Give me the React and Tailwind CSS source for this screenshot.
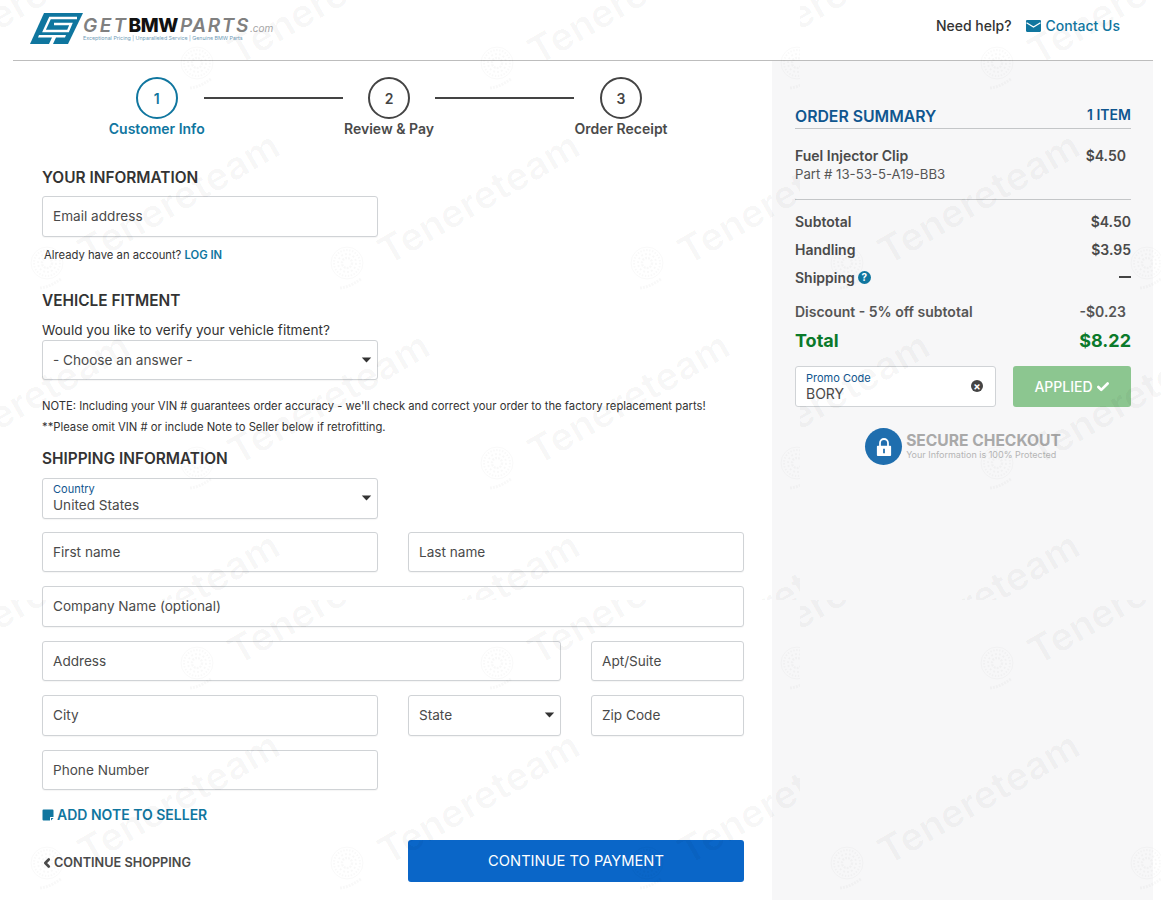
import React from 'react';
import { ChevronLeft, Check } from 'lucide-react';

// watermark image repeats every 800x600, each unit is a rosette with the name beside it
const TILES = [[0, 0], [800, 0], [0, 600], [800, 600]];
const MARKS = [
  [198, 63], [498, 63], [798, 63], [-102, 63],
  [48, 263], [348, 263], [648, 263], [-252, 263],
  [198, 463], [498, 463], [798, 463], [-102, 463],
  [48, 663], [348, 663], [648, 663], [-252, 663],
];

function Rosette({ x, y }) {
  return (
    <svg viewBox="0 0 40 46" className="absolute w-[40px] h-[46px]" style={{ left: x - 20, top: y - 17 }}>
      <g fill="none" stroke="#000" strokeOpacity="0.028">
        <circle cx="19" cy="17" r="16" />
        <circle cx="19" cy="17" r="13" strokeDasharray="1.5 1.5" strokeWidth="2" />
        <circle cx="19" cy="17" r="9" strokeDasharray="2 2" strokeWidth="2" />
        <circle cx="19" cy="17" r="5" strokeDasharray="2 1" strokeWidth="2.500" />
        <path d="M12 42l6-1 7-3 8-5" strokeWidth="3" strokeDasharray="2 1" />
      </g>
    </svg>
  );
}

function Watermarks() {
  return (
    <div className="absolute inset-0 overflow-hidden pointer-events-none">
      {TILES.map(([tx, ty]) => (
        <div key={`${tx}-${ty}`} className="absolute w-[800px] h-[600px] overflow-hidden" style={{ left: tx, top: ty }}>
          {MARKS.map(([x, y]) => (
            <React.Fragment key={`${x}-${y}`}>
              <Rosette x={x} y={y} />
              <div
                className="absolute origin-left -translate-y-1/2 -rotate-[30deg] text-[38.5px] leading-[48px] font-bold whitespace-nowrap text-black/[0.028]"
                style={{ left: x + 33, top: y - 9 }}
              >
                Tenereteam
              </div>
            </React.Fragment>
          ))}
        </div>
      ))}
    </div>
  );
}

function Caret() {
  return (
    <svg viewBox="0 0 12 7" className="absolute top-1/2 -translate-y-1/2 right-[5px] w-[11px] h-[6px]">
      <path d="M0.5 0.5h11L6 6.5z" fill="#333" />
    </svg>
  );
}

function Field({ children, className = '', caret }) {
  return (
    <div className={`relative h-[40.5px] flex items-center px-[10px] bg-white border border-[#d0d3d6] rounded-[3px] text-[13.6px] text-[#4a4a4a] shadow-[0_1px_1px_rgba(0,0,0,0.04)] ${className}`}>
      {children}
      {caret && <Caret />}
    </div>
  );
}

function Step({ n, label, active, width }) {
  return (
    <div className={`flex flex-col items-center shrink-0 ${width}`}>
      <div className={`w-[42px] h-[42px] rounded-full border-2 flex items-center justify-center text-[14px] font-semibold bg-white ${active ? 'border-[#10769f] text-[#10769f]' : 'border-[#444] text-[#444]'}`}>
        {n}
      </div>
      <div className={`text-[14px] leading-[20px] font-semibold whitespace-nowrap ${active ? 'text-[#10769f]' : 'text-[#4a4a4a]'}`}>
        {label}
      </div>
    </div>
  );
}

function Logo() {
  return (
    <div className="flex items-start">
      <svg viewBox="0 0 53 31" className="w-[53px] h-[31px] shrink-0">
        <path d="M14 0h39L38 31H0z" fill="#0f769f" />
        <path d="M47 5H20L14 18h24l3-7H24" fill="none" stroke="#fff" strokeWidth="2.400" />
        <path d="M9 22h27l-1 2.500H26L23 31h-4l3-6.500H8z" fill="#fff" />
      </svg>
      <div className="pt-[4px]">
        <div className="flex items-baseline h-[17px] leading-[17px] text-[19px] whitespace-nowrap">
          <span className="italic font-semibold tracking-[2.4px] text-[#808080]">GET</span>
          <span className="font-extrabold text-[#111] tracking-[-0.4px]">BMW</span>
          <span className="ml-[2px] italic font-semibold tracking-[1.6px] text-[#808080]">PARTS</span>
          <span className="italic text-[10px] text-[#a5a5a5]">.com</span>
        </div>
        <div className="mt-[1px] text-[5.3px] leading-[7px] text-[#6f9cb8] whitespace-nowrap">
          Exceptional Pricing | Unparalleled Service | Genuine BMW Parts
        </div>
      </div>
    </div>
  );
}

function SummaryRow({ label, value, className = '' }) {
  return (
    <div className={`h-[20px] flex justify-between items-center text-[14px] font-semibold text-[#4a4a4a] ${className}`}>
      <span>{label}</span>
      <span>{value}</span>
    </div>
  );
}

export default function App() {
  return (
    <div className="relative w-[1161px] h-[900px] overflow-hidden bg-white font-['Inter','Liberation_Sans',sans-serif] text-[#444]">
      <div className="ml-[13px] w-[1140px] flex flex-col h-full">
        {/* header */}
        <header className="h-[61px] shrink-0 border-b border-[#bdbdbd] flex justify-between pl-[17px] pr-[33px]">
          <div className="pt-[13px]"><Logo /></div>
          <div className="flex items-center text-[14px] font-medium pb-[9px]">
            <span className="text-[#333]">Need help?</span>
            <svg viewBox="0 0 14 11" className="ml-[14px] w-[15px] h-[12px]">
              <rect width="14" height="11" rx="1" fill="#10769f" />
              <path d="M0.500 2.500L7 6.500l6.500-4" fill="none" stroke="#fff" strokeWidth="1.200" />
            </svg>
            <span className="ml-[5px] text-[#10769f]">Contact Us</span>
          </div>
        </header>

        <div className="flex flex-1">
          {/* checkout form */}
          <main className="w-[759px] shrink-0 pl-[29px] pr-[28px]">
            <div className="flex pt-[16px] pl-[67.5px]">
              <Step n="1" label="Customer Info" active width="w-[94.5px]" />
              <div className="w-[139px] h-[2px] bg-[#444] mt-[20px] shrink-0" />
              <Step n="2" label="Review & Pay" width="w-[92px]" />
              <div className="w-[139px] h-[2px] bg-[#444] mt-[20px] shrink-0" />
              <Step n="3" label="Order Receipt" width="w-[94px]" />
            </div>

            <h2 className="mt-[29px] text-[15.4px] leading-[20px] font-semibold text-[#333]">YOUR INFORMATION</h2>
            <Field className="mt-[8px] w-[336px]">Email address</Field>
            <p className="mt-[11px] ml-[2px] text-[11.25px] leading-[14px] text-[#333]">
              Already have an account? <span className="font-semibold text-[#10769f]">LOG IN</span>
            </p>

            <h2 className="mt-[29px] text-[15.4px] leading-[20px] font-semibold text-[#333]">VEHICLE FITMENT</h2>
            <p className="mt-[9px] text-[13.6px] leading-[20px] text-[#333]">Would you like to verify your vehicle fitment?</p>
            <Field className="w-[336px]" caret>- Choose an answer -</Field>
            <p className="mt-[16px] text-[11.25px] leading-[21px] text-[#333]">
              NOTE: Including your VIN # guarantees order accuracy - we'll check and correct your order to the factory replacement parts!
              <br />
              **Please omit VIN # or include Note to Seller below if retrofitting.
            </p>

            <h2 className="mt-[11px] text-[15.4px] leading-[20px] font-semibold text-[#333]">SHIPPING INFORMATION</h2>
            <Field className="mt-[9px] w-[336px] flex-col !items-start justify-center" caret>
              <span className="text-[11px] leading-[13px] text-[#10568f]">Country</span>
              <span className="leading-[18px]">United States</span>
            </Field>

            <div className="mt-[13.1px] flex flex-col gap-[14px]">
              <div className="flex gap-[30px]">
                <Field className="w-[336px]">First name</Field>
                <Field className="w-[336px]">Last name</Field>
              </div>
              <Field>Company Name (optional)</Field>
              <div className="flex gap-[30px]">
                <Field className="w-[519px]">Address</Field>
                <Field className="w-[153px]">Apt/Suite</Field>
              </div>
              <div className="flex gap-[30px]">
                <Field className="w-[336px]">City</Field>
                <Field className="w-[153px]" caret>State</Field>
                <Field className="w-[153px]">Zip Code</Field>
              </div>
              <Field className="w-[336px]">Phone Number</Field>
            </div>

            <div className="mt-[15.5px] flex items-center text-[14px] leading-[18px] font-semibold text-[#10769f]">
              <svg viewBox="0 0 12 12" className="w-[12px] h-[12px] mr-[3px]">
                <path d="M1.500 0.500h9a1 1 0 0 1 1 1V8H8.500a.5.5 0 0 0-.5.5v3H1.500a1 1 0 0 1-1-1v-9a1 1 0 0 1 1-1zM9 11.500V9h2.500z" fill="#10769f" />
              </svg>
              ADD NOTE TO SELLER
            </div>

            <div className="mt-[16px] flex items-center">
              <div className="w-[366px] pt-[4px] flex items-center text-[12.7px] font-semibold text-[#4a4a4a]">
                <ChevronLeft className="w-[14px] h-[14px] -ml-[2px]" strokeWidth={4.5} />
                <span>CONTINUE SHOPPING</span>
              </div>
              <button type="button" className="w-[336px] h-[42px] rounded-[3px] bg-[#0a66c8] text-white text-[14.7px] font-normal">
                CONTINUE TO PAYMENT
              </button>
            </div>
          </main>

          {/* order summary */}
          <aside className="flex-1 bg-[#f7f7f8] pl-[23px] pr-[22px] pt-[43px]">
            <div className="flex justify-between items-end border-b border-[#c4c6c8] font-semibold text-[#10568f]">
              <span className="text-[15.8px] leading-[22px]">ORDER SUMMARY</span>
              <span className="text-[14px] leading-[22px] pb-[2px]">1 ITEM</span>
            </div>
            <div className="mt-[17px] flex justify-between text-[14px] leading-[20px] font-semibold text-[#4a4a4a]">
              <span>Fuel Injector Clip</span>
              <span className="mr-[5px]">$4.50</span>
            </div>
            <p className="-mt-[1px] text-[13.2px] leading-[18px] text-[#555] pb-[16px] border-b border-[#c4c6c8]">Part # 13-53-5-A19-BB3</p>

            <SummaryRow label="Subtotal" value="$4.50" className="mt-[11px]" />
            <SummaryRow label="Handling" value="$3.95" className="mt-[8px]" />
            <div className="mt-[8px] h-[20px] flex justify-between items-center text-[14px] font-semibold text-[#4a4a4a]">
              <span className="flex items-center">
                Shipping
                <span className="ml-[3px] w-[13px] h-[13px] rounded-full bg-[#10769f] text-white text-[10px] font-bold flex items-center justify-center">?</span>
              </span>
              <span className="w-[12px] h-[2px] bg-[#444]" />
            </div>
            <div className="mt-[14px] h-[20px] flex justify-between items-center text-[14px] font-semibold text-[#555]">
              <span>Discount - 5% off subtotal</span>
              <span className="mr-[5px]">-$0.23</span>
            </div>
            <div className="mt-[7px] h-[24px] flex justify-between items-center text-[18px] font-bold text-[#0b7a2b]">
              <span>Total</span>
              <span>$8.22</span>
            </div>

            <div className="mt-[14px] flex gap-[17px]">
              <div className="relative w-[201px] h-[41px] bg-white border border-[#d0d3d6] rounded-[3px] px-[10px] flex flex-col justify-center">
                <span className="text-[11px] leading-[13px] text-[#10568f]">Promo Code</span>
                <span className="text-[14px] leading-[17px] text-[#4a4a4a]">BORY</span>
                <span className="absolute right-[12px] top-[13px] w-[12px] h-[12px] rounded-full bg-[#444] text-white text-[11px] leading-[12px] font-bold flex items-center justify-center">×</span>
              </div>
              <div className="w-[118px] h-[41px] rounded-[3px] bg-[#8cc690] text-white text-[14px] font-medium flex items-center justify-center">
                APPLIED
                <Check className="ml-[3px] w-[14px] h-[14px]" strokeWidth={4.5} />
              </div>
            </div>

            <div className="mt-[21px] flex items-center justify-center">
              <div className="w-[37px] h-[37px] rounded-full bg-[#1f6eae] flex items-center justify-center">
                <svg viewBox="0 0 18 22" className="w-[16px] h-[20px]">
                  <path d="M4.500 10V6.500a4.500 4.500 0 0 1 9 0V10" fill="none" stroke="#fff" strokeWidth="2" />
                  <path fillRule="evenodd" d="M2 9.500h14a1 1 0 0 1 1 1V20a1 1 0 0 1-1 1H2a1 1 0 0 1-1-1v-9.500a1 1 0 0 1 1-1zM8 13v5h2v-5z" fill="#fff" />
                </svg>
              </div>
              <div className="ml-[4px] -mt-[1px]">
                <div className="text-[15.6px] leading-[17px] font-bold text-[#a9a9a9]">SECURE CHECKOUT</div>
                <div className="text-[9px] leading-[11px] text-[#b5b5b5]">Your Information is 100% Protected</div>
              </div>
            </div>
          </aside>
        </div>
      </div>
      <Watermarks />
    </div>
  );
}
